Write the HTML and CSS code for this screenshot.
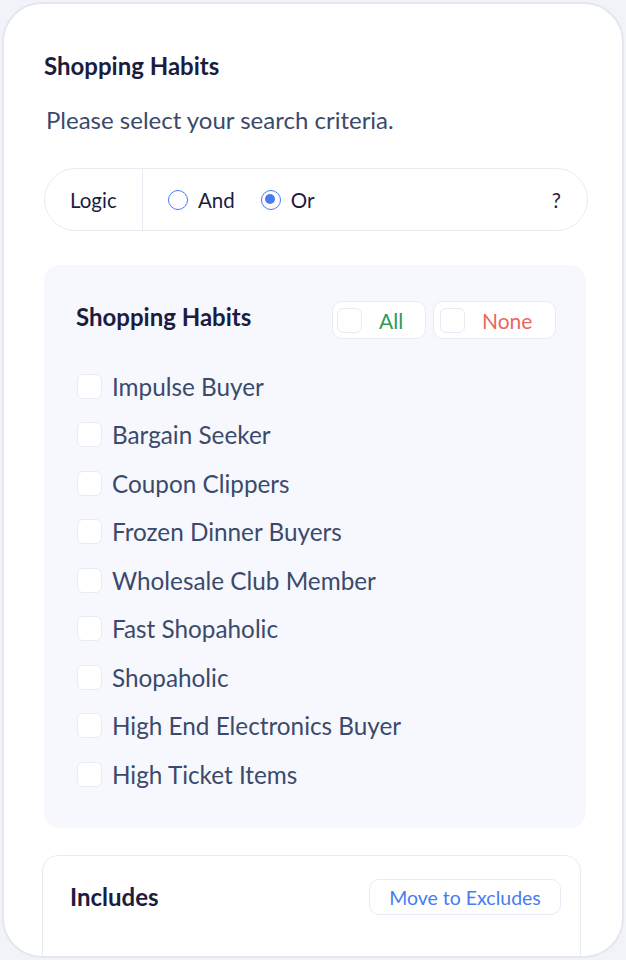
FILE: index.html
```html
<!DOCTYPE html>
<html lang="en">
<head>
    <meta charset="UTF-8">
    <meta name="viewport" content="width=device-width, initial-scale=1.0">
    <title>Shopping Habits</title>
    <link rel="stylesheet" href="styles.css">
</head>
<body>
    <div id="card">
        <h2 class="title">Shopping Habits</h2>
        <p class="subtitle">Please select your search criteria.</p>

        <div class="logic">
            <div class="logic-label">Logic</div>
            <div class="logic-options">
                <label class="radio"><span class="dot"></span>And</label>
                <label class="radio checked"><span class="dot"></span>Or</label>
            </div>
            <div class="help">?</div>
        </div>

        <div class="panel">
            <div class="panel-head">
                <h3>Shopping Habits</h3>
                <div class="quick">
                    <div class="quick-btn all"><span class="box"></span>All</div>
                    <div class="quick-btn none"><span class="box"></span>None</div>
                </div>
            </div>
            <ul class="habits">
                <li><span class="box"></span>Impulse Buyer</li>
                <li><span class="box"></span>Bargain Seeker</li>
                <li><span class="box"></span>Coupon Clippers</li>
                <li><span class="box"></span>Frozen Dinner Buyers</li>
                <li><span class="box"></span>Wholesale Club Member</li>
                <li><span class="box"></span>Fast Shopaholic</li>
                <li><span class="box"></span>Shopaholic</li>
                <li><span class="box"></span>High End Electronics Buyer</li>
                <li><span class="box"></span>High Ticket Items</li>
            </ul>
        </div>

        <div class="includes">
            <h3>Includes</h3>
            <div class="move-btn">Move to Excludes</div>
        </div>
    </div>
</body>
</html>
```

FILE: styles.css
```css
* {
    box-sizing: border-box;
}
body {
    margin: 0;
    padding: 2px;
    background-color: #f1f3f8;
    font-family: Lato, "Open Sans", sans-serif;
    color: #3b4a6b;
}
#card {
    height: 956px;
    border: 2px solid #e3e7f0;
    border-radius: 40px;
    background-color: white;
    overflow: hidden;
    padding: 47px 34px 0 40px;
}
.title {
    margin: 0;
    font-size: 24px;
    font-weight: 700;
    color: #1b1c40;
    line-height: 30px;
}
.subtitle {
    margin: 24px 0 0 2px;
    font-size: 24px;
    line-height: 30px;
    color: #3b4a6b;
}
.logic {
    margin-top: 33px;
    height: 63px;
    border: 1px solid #e8ebf3;
    border-radius: 32px;
    display: flex;
    align-items: stretch;
    font-size: 20.5px;
    color: #1b1c40;
}
.logic-label {
    width: 98px;
    display: flex;
    align-items: center;
    padding-left: 25px;
    border-right: 1px solid #e8ebf3;
}
.logic-options {
    flex: 1;
    display: flex;
    align-items: center;
    gap: 26px;
    padding-left: 25px;
}
.radio {
    display: flex;
    align-items: center;
    gap: 10px;
}
.radio .dot {
    width: 20px;
    height: 20px;
    border: 1.5px solid #4a7cf0;
    border-radius: 50%;
    background-color: white;
    position: relative;
}
.radio.checked .dot::after {
    content: "";
    position: absolute;
    left: 3.5px;
    top: 3.5px;
    width: 10px;
    height: 10px;
    border-radius: 50%;
    background-color: #4a7cf0;
}
.help {
    display: flex;
    align-items: center;
    padding-right: 26px;
}
.panel {
    margin-top: 34px;
    margin-right: 2px;
    background-color: #f7f8fd;
    border-radius: 16px;
    padding: 36px 30px 30px 32px;
    height: 563px;
}
.panel-head {
    display: flex;
    align-items: center;
    justify-content: space-between;
}
.panel-head h3 {
    margin: 0;
    font-size: 24px;
    font-weight: 700;
    color: #1b1c40;
    position: relative;
    top: -4px;
}
.quick {
    display: flex;
    gap: 7px;
}
.quick-btn {
    height: 38px;
    border: 1.5px solid #e8ebf5;
    border-radius: 10px;
    background-color: white;
    display: flex;
    align-items: center;
    font-size: 21px;
    padding-left: 4px;
}
.quick-btn .box {
    margin-right: 17px;
}
.quick-btn.all {
    width: 94px;
    color: #2e9a5a;
}
.quick-btn.none {
    width: 123px;
    color: #e8675f;
    padding-left: 6px;
}
.box {
    width: 25px;
    height: 25px;
    border: 1.5px solid #e8ebf5;
    border-radius: 6px;
    background-color: white;
    flex-shrink: 0;
}
.habits {
    list-style: none;
    margin: 23px 0 0 0;
    padding: 0 0 0 1px;
}
.habits li {
    display: flex;
    align-items: center;
    gap: 10px;
    height: 48.5px;
    font-size: 24.3px;
    color: #3b4a6b;
}
.includes {
    margin-top: 27px;
    margin-left: -2px;
    margin-right: 7px;
    height: 200px;
    border: 1.5px solid #e8ebf3;
    border-radius: 16px;
    display: flex;
    align-items: flex-start;
    justify-content: space-between;
    padding: 23px 19px 0 27px;
}
.includes h3 {
    margin: 0;
    font-size: 24px;
    font-weight: 700;
    color: #1b1c40;
    line-height: 36px;
}
.move-btn {
    height: 36px;
    width: 192px;
    border: 1.5px solid #e8ebf5;
    border-radius: 10px;
    display: flex;
    align-items: center;
    justify-content: center;
    font-size: 19.5px;
    color: #4a7cf0;
}
```
